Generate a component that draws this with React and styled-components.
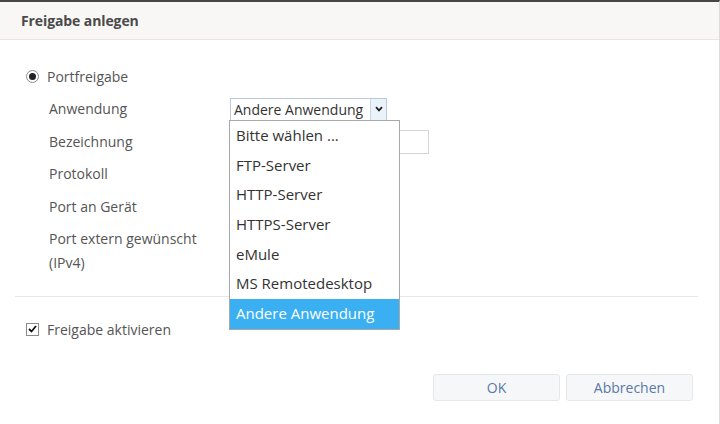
import React from 'react';
import styled, { createGlobalStyle } from 'styled-components';

const GlobalStyle = createGlobalStyle`
  html, body {
    margin: 0;
    padding: 0;
    background: #ffffff;
  }
  body {
    font-family: 'Open Sans', 'Liberation Sans', sans-serif;
    color: #444;
  }
`;

const Dialog = styled.div`
  width: 720px;
  height: 424px;
  box-sizing: border-box;
  border-top: 2px solid #464646;
  border-right: 1px solid #dcdcdc;
  background: #fff;
  display: flex;
  flex-direction: column;
`;

const Header = styled.header`
  height: 37px;
  background: #f8f7f5;
  border-bottom: 1px solid #e6e6e6;
  display: flex;
  align-items: center;
  padding-left: 21px;
`;

const Title = styled.h1`
  margin: 0;
  font-size: 14px;
  font-weight: 700;
  color: #4a4a4a;
  letter-spacing: -0.1px;
`;

const Body = styled.div`
  padding: 24px 21px 0 15px;
  display: flex;
  flex-direction: column;
`;

const OptionRow = styled.label`
  display: flex;
  align-items: center;
  gap: 8px;
  height: 24px;
  padding-left: 11px;
  font-size: 14px;
  color: #555;
`;

const Radio = styled.span`
  width: 11px;
  height: 11px;
  border-radius: 50%;
  border: 1px solid #8a8a8a;
  display: flex;
  align-items: center;
  justify-content: center;
  background: #fff;

  &::after {
    content: '';
    width: 7px;
    height: 7px;
    border-radius: 50%;
    background: #222;
  }
`;

const Checkbox = styled.span`
  width: 11px;
  height: 11px;
  border: 1px solid #8a8a8a;
  display: flex;
  align-items: center;
  justify-content: center;
  background: #fff;
`;

const Form = styled.div`
  display: grid;
  grid-template-columns: 181px 1fr;
  row-gap: 8.5px;
  margin-top: 9px;
  padding-left: 34px;
`;

const Label = styled.div`
  font-size: 14px;
  line-height: 24px;
  color: #555;
`;

const Field = styled.div`
  position: relative;
  height: 24px;
  display: flex;
  align-items: ${props => (props.top ? 'flex-start' : 'center')};
`;

const SelectBox = styled.div`
  width: 155px;
  height: 21px;
  border: 1px solid #b9c9d9;
  display: flex;
  align-items: stretch;
  background: #fff;
`;

const SelectValue = styled.span`
  flex: 1;
  font-size: 14px;
  line-height: 21px;
  padding-left: 3px;
  color: #333;
  white-space: nowrap;
`;

const SelectArrow = styled.span`
  width: 15px;
  border-left: 1px solid #c9d7e4;
  background: #eaf2fa;
  display: flex;
  align-items: center;
  justify-content: center;
`;

const TextInput = styled.div`
  width: 199px;
  height: 24px;
  border: 1px solid #d5d5d5;
  box-sizing: border-box;
  background: #fff;
`;

const Listbox = styled.ul`
  position: absolute;
  left: -1px;
  top: 23px;
  width: 169px;
  margin: 0;
  padding: 0;
  list-style: none;
  border: 1px solid #a8a8a8;
  background: #fff;
  z-index: 5;
`;

const ListItem = styled.li`
  height: 29.7px;
  line-height: 29.7px;
  padding-left: 6px;
  font-size: 15px;
  color: ${props => (props.selected ? '#fff' : '#333')};
  background: ${props => (props.selected ? '#3aaff2' : 'transparent')};
  white-space: nowrap;
`;

const Separator = styled.hr`
  margin: 21px 0 20px;
  border: 0;
  border-top: 1px solid #e8e8e8;
`;

const Footer = styled.div`
  display: flex;
  justify-content: flex-end;
  gap: 6px;
  margin-top: 33px;
  padding-right: 5px;
`;

const Button = styled.button`
  width: 127px;
  height: 27px;
  border: 1px solid #e4e8ec;
  border-radius: 3px;
  background: #f5f7f9;
  color: #5a79a6;
  font-family: inherit;
  font-size: 14px;
  padding: 0;
`;

const options = [
  'Bitte wählen ...',
  'FTP-Server',
  'HTTP-Server',
  'HTTPS-Server',
  'eMule',
  'MS Remotedesktop',
  'Andere Anwendung',
];

export default function App() {
  const selected = 'Andere Anwendung';

  return (
    <>
      <GlobalStyle />
      <Dialog>
        <Header>
          <Title>Freigabe anlegen</Title>
        </Header>
        <Body>
          <OptionRow>
            <Radio />
            Portfreigabe
          </OptionRow>
          <Form>
            <Label>Anwendung</Label>
            <Field>
              <SelectBox>
                <SelectValue>{selected}</SelectValue>
                <SelectArrow>
                  <svg width="8" height="6" viewBox="0 0 8 6">
                    <path d="M1 1.2 L4 4.4 L7 1.2" fill="none" stroke="#222" strokeWidth="1.8" />
                  </svg>
                </SelectArrow>
              </SelectBox>
              <Listbox>
                {options.map(o => (
                  <ListItem key={o} selected={o === selected}>
                    {o}
                  </ListItem>
                ))}
              </Listbox>
            </Field>
            <Label>Bezeichnung</Label>
            <Field>
              <TextInput />
            </Field>
            <Label>Protokoll</Label>
            <Field />
            <Label>Port an Gerät</Label>
            <Field />
            <Label>
              Port extern gewünscht
              <br />
              (IPv4)
            </Label>
            <Field top />
          </Form>
          <Separator />
          <OptionRow>
            <Checkbox>
              <svg width="9" height="8" viewBox="0 0 9 8">
                <path d="M1 4 L3.5 6.5 L8 1" fill="none" stroke="#111" strokeWidth="1.8" />
              </svg>
            </Checkbox>
            Freigabe aktivieren
          </OptionRow>
          <Footer>
            <Button>OK</Button>
            <Button>Abbrechen</Button>
          </Footer>
        </Body>
      </Dialog>
    </>
  );
}
